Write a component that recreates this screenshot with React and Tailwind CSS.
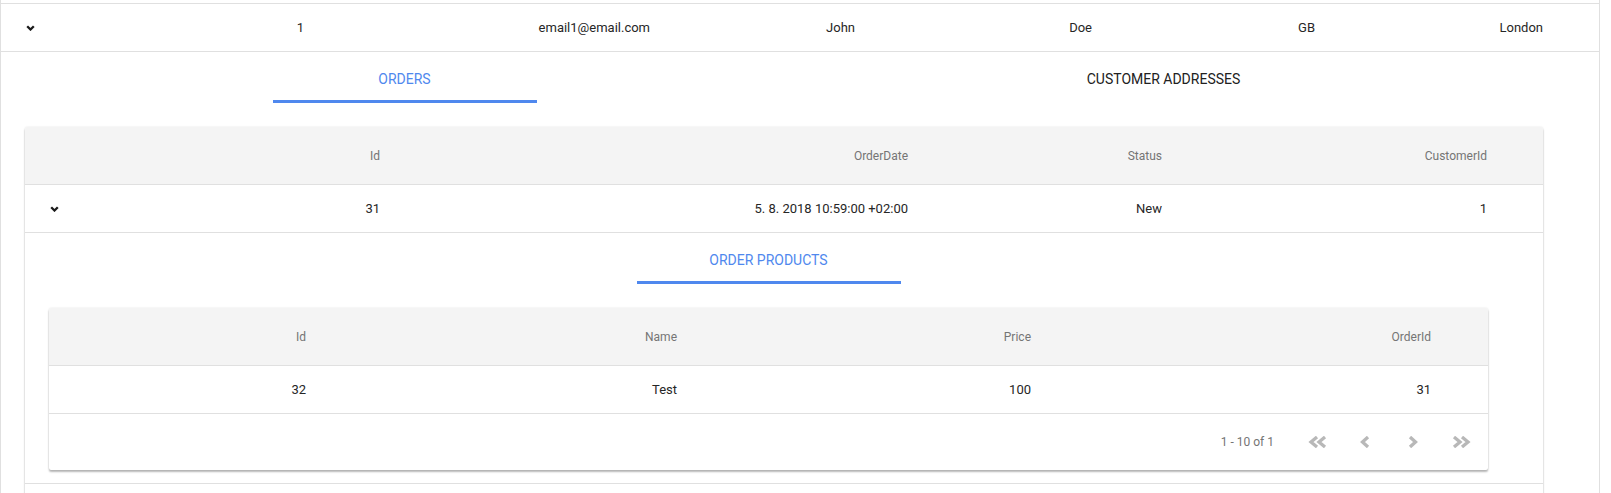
import React from "react";

const Chevron = () => (
  <svg width="9" height="6" viewBox="0 0 9 6" className="block">
    <path d="M1.2 1.2 L4.5 4.5 L7.8 1.2" fill="none" stroke="#1a1a1a" strokeWidth="2.3" />
  </svg>
);

const DoubleLeft = () => (
  <svg width="19" height="12" viewBox="0 0 19 12" className="block">
    <path d="M9 1 L3 6 L9 11 M17 1 L11 6 L17 11" fill="none" stroke="#b8b8b8" strokeWidth="3.3" />
  </svg>
);
const DoubleRight = () => (
  <svg width="19" height="12" viewBox="0 0 19 12" className="block">
    <path d="M2 1 L8 6 L2 11 M10 1 L16 6 L10 11" fill="none" stroke="#b8b8b8" strokeWidth="3.3" />
  </svg>
);
const Left = () => (
  <svg width="10" height="12" viewBox="0 0 10 12" className="block">
    <path d="M8 1 L2.5 6 L8 11" fill="none" stroke="#b8b8b8" strokeWidth="3.3" />
  </svg>
);
const Right = () => (
  <svg width="10" height="12" viewBox="0 0 10 12" className="block">
    <path d="M2 1 L7.5 6 L2 11" fill="none" stroke="#b8b8b8" strokeWidth="3.3" />
  </svg>
);

function Pager() {
  return (
    <div className="h-[56px] flex items-center justify-end pr-[3px]">
      <span className="text-[12px] text-[#757575]">1 - 10 of 1</span>
      <div className="ml-[19px] flex">
        <div className="w-[48px] flex justify-center"><DoubleLeft /></div>
        <div className="w-[48px] flex justify-center"><Left /></div>
        <div className="w-[48px] flex justify-center"><Right /></div>
        <div className="w-[48px] flex justify-center"><DoubleRight /></div>
      </div>
    </div>
  );
}

function Tab({ label, active }) {
  return (
    <div className="flex-1 h-[51px] flex flex-col items-center">
      <div className={`h-[48px] pt-[7px] flex items-center text-[14px] ${active ? "text-[#4f88ee]" : "text-[#212121]"}`}>
        {label}
      </div>
      {active ? <div className="w-[264px] h-[3px] bg-[#4f88ee]" /> : <div className="h-[3px]" />}
    </div>
  );
}

const card = "bg-white rounded-[2px] shadow-[0_2px_2px_rgba(0,0,0,0.28),0_0_2px_rgba(0,0,0,0.12)]";

export default function App() {
  return (
    <div className="w-[1611px] h-[493px] overflow-hidden bg-white font-['Roboto',sans-serif] text-[13px] text-[#262626]">
      <div className="w-[1600px] border-x border-[#e0e0e0]">
        <div className="h-[3px]" />
        {/* customer row */}
        <div className="h-[49px] border-y border-[#e0e0e0] flex items-center">
          <div className="w-[57px] flex justify-center pl-[1px]"><Chevron /></div>
          <div className="w-[246px] text-right">1</div>
          <div className="w-[346px] text-right">email1@email.com</div>
          <div className="w-[205px] text-right">John</div>
          <div className="w-[237px] text-right">Doe</div>
          <div className="w-[223px] text-right">GB</div>
          <div className="w-[228px] text-right">London</div>
        </div>

        {/* detail */}
        <div className="pl-[24px] pr-[56px]">
          <div className="flex">
            <Tab label="ORDERS" active />
            <Tab label="CUSTOMER ADDRESSES" />
          </div>

          <div className={`mt-[24px] ${card}`}>
            <div className="h-[58px] bg-[#f4f4f4] border-b border-[#e0e0e0] flex items-center text-[12px] text-[#757575] rounded-t-[2px]">
              <div className="w-[58px]" />
              <div className="w-[297px] text-right">Id</div>
              <div className="w-[528px] text-right">OrderDate</div>
              <div className="w-[254px] text-right">Status</div>
              <div className="w-[325px] text-right">CustomerId</div>
            </div>
            <div className="h-[48px] border-b border-[#e0e0e0] flex items-center">
              <div className="w-[58px] flex justify-center pl-[1px]"><Chevron /></div>
              <div className="w-[297px] text-right">31</div>
              <div className="w-[528px] text-right">5. 8. 2018 10:59:00 +02:00</div>
              <div className="w-[254px] text-right">New</div>
              <div className="w-[325px] text-right">1</div>
            </div>

            <div className="pl-[24px] pr-[55px] pb-[13px] border-b border-[#e0e0e0]">
              <div className="flex">
                <Tab label="ORDER PRODUCTS" active />
              </div>
              <div className={`mt-[24px] ${card}`}>
                <div className="h-[58px] bg-[#f4f4f4] border-b border-[#e0e0e0] flex items-center text-[12px] text-[#757575] rounded-t-[2px]">
                  <div className="w-[257px] text-right">Id</div>
                  <div className="w-[371px] text-right">Name</div>
                  <div className="w-[354px] text-right">Price</div>
                  <div className="w-[400px] text-right">OrderId</div>
                </div>
                <div className="h-[48px] border-b border-[#e0e0e0] flex items-center">
                  <div className="w-[257px] text-right">32</div>
                  <div className="w-[371px] text-right">Test</div>
                  <div className="w-[354px] text-right">100</div>
                  <div className="w-[400px] text-right">31</div>
                </div>
                <Pager />
              </div>
            </div>
            <div className="h-[56px]" />
          </div>
          <div className="h-[24px]" />
        </div>
      </div>
    </div>
  );
}
